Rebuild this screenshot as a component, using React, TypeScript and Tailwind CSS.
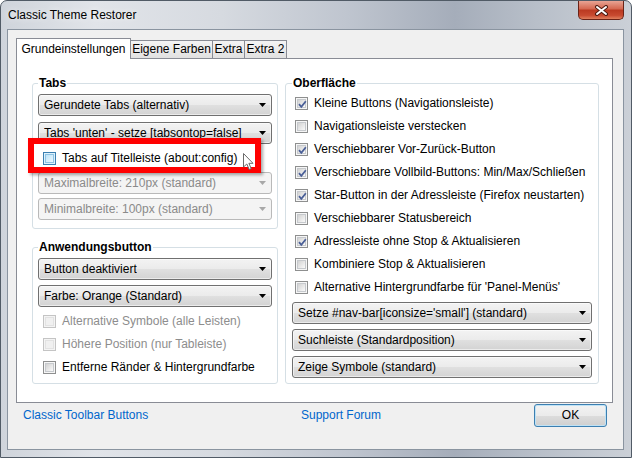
import React from "react";

function Box({ checked = false, disabled = false, hot = false }: { checked?: boolean; disabled?: boolean; hot?: boolean }) {
  const outer = hot
    ? "border-[#3c7fb1] bg-[#def2fc]"
    : disabled
      ? "border-[#c4c4c4] bg-[#f4f4f4]"
      : "border-[#8e8f8f] bg-[#f6f6f6]";
  const inner = hot
    ? "bg-linear-to-br from-[#bfe4f8] to-[#eaf7fe] border-[#8fc3e4]"
    : disabled
      ? "bg-[#f0f0f0] border-[#e2e2e2]"
      : "bg-linear-to-br from-[#d2d2d2] to-[#fafafa] border-[#c6c9cd]";
  return (
    <span className={`relative w-[13px] h-[13px] shrink-0 border p-px flex ${outer}`}>
      <span className={`flex-1 border ${inner}`} />
      {checked && (
        <svg className="absolute inset-0" width="13" height="13" viewBox="0 0 13 13">
          <path d="M3 6.2 L5.3 8.8 L9.8 3.2" fill="none" stroke="#4a5f97" strokeWidth="1.8" />
        </svg>
      )}
    </span>
  );
}

function Check({ label, checked, disabled }: { label: string; checked?: boolean; disabled?: boolean }) {
  return (
    <div className="h-[23px] flex items-center gap-[6px]">
      <Box checked={checked} disabled={disabled} />
      <span className={disabled ? "text-[#8d8d8d]" : "text-black"}>{label}</span>
    </div>
  );
}

function Combo({ label, disabled = false, className = "" }: { label: string; disabled?: boolean; className?: string }) {
  return (
    <div
      className={
        disabled
          ? `h-[22px] flex items-center justify-between pl-[5px] pr-[5px] rounded-[3px] border border-[#b9b9b9] bg-[#f4f4f4] text-[#8a8a8a] ${className}`
          : `h-[22px] flex items-center justify-between pl-[5px] pr-[5px] rounded-[3px] border border-[#707070] bg-[linear-gradient(#f3f3f3,#ebebeb_50%,#e0e0e0_50%,#d3d3d3)] shadow-[inset_0_0_0_1px_rgba(255,255,255,0.55)] ${className}`
      }
    >
      <span className="truncate">{label}</span>
      <svg width="7" height="4" viewBox="0 0 7 4" className="shrink-0">
        <path d="M0 0h7L3.5 4z" fill={disabled ? "#a8a8a8" : "#000"} />
      </svg>
    </div>
  );
}

export default function App() {
  return (
    <div className="w-[632px] h-[458px] flex flex-col rounded-t-[7px] border border-[#515b66] bg-[linear-gradient(90deg,#cfd4db_0%,#e1e4e9_15%,#d6dae0_35%,#bfc5cf_55%,#a5adba_72%,#b8bfc9_85%,#cbd0d7_100%)] font-['Liberation_Sans',Arial,sans-serif] text-[12px] leading-[15px] text-black">
      {/* Title bar */}
      <div className="h-[28px] shrink-0 flex justify-between">
        <span className="pl-[7px] pt-[7px] [text-shadow:0_0_6px_rgba(255,255,255,0.95)]">Classic Theme Restorer</span>
        <div className="mr-[7px] w-[46px] h-[19px] rounded-b-[5px] border border-t-0 border-[#6a2317] bg-[linear-gradient(#e8a494,#d56a53_42%,#bb3a22_52%,#c84a30_80%,#e0805e)] flex items-center justify-center">
          <svg width="15" height="11" viewBox="0 0 15 11">
            <path d="M3 2 L12 9 M12 2 L3 9" stroke="#4d1a10" strokeWidth="4" strokeLinecap="round" />
            <path d="M3 2 L12 9 M12 2 L3 9" stroke="#ffffff" strokeWidth="2" strokeLinecap="round" />
          </svg>
        </div>
      </div>

      {/* Client area */}
      <div className="flex-1 ml-[6px] mr-[7px] mb-[7px] border border-[#8a94a0] bg-[#f0f0f0] flex flex-col pl-[8px] pr-[10px] pt-[8px]">
        {/* Tabs */}
        <div className="h-[20px] flex items-end relative z-10">
          <div className="w-[115px] h-[21px] -mb-px border border-b-0 border-[#898c95] bg-white flex items-center justify-center">
            Grundeinstellungen
          </div>
          <div className="w-[83px] h-[18px] -ml-px border border-b-0 border-[#898c95] bg-linear-to-b from-[#f4f4f4] to-[#e1e1e1] flex items-center justify-center">
            Eigene Farben
          </div>
          <div className="w-[33px] h-[18px] -ml-px border border-b-0 border-[#898c95] bg-linear-to-b from-[#f4f4f4] to-[#e1e1e1] flex items-center justify-center">
            Extra
          </div>
          <div className="w-[43px] h-[18px] -ml-px border border-b-0 border-[#898c95] bg-linear-to-b from-[#f4f4f4] to-[#e1e1e1] flex items-center justify-center">
            Extra 2
          </div>
        </div>

        {/* Tab panel */}
        <div className="h-[345px] border border-[#898c95] bg-white flex gap-[7px] pl-[15px] pt-[17px]">
          {/* Left column */}
          <div className="w-[246px] flex flex-col gap-[11px]">
            <fieldset className="border border-[#d5dfe5] rounded-[3px] px-[5px] pb-[8px]">
              <legend className="px-px font-bold leading-[14px]">Tabs</legend>
              <Combo label="Gerundete Tabs (alternativ)" className="mt-[4px]" />
              <Combo label="Tabs 'unten' - setze [tabsontop=false]" className="mt-[6px]" />
              <div className="relative h-[28px] flex items-center gap-[6px] pl-[5px]">
                <div className="absolute left-[-10px] top-[-6px] w-[233px] h-[35px] border-[6px] border-[#ff0000] shadow-[2px_2px_3px_rgba(0,0,0,0.35)]" />
                <Box hot />
                <span className="relative">Tabs auf Titelleiste (about:config)</span>
                <svg className="absolute left-[205px] top-[9px]" width="11" height="18" viewBox="0 0 11 18">
                  <path d="M0.5 0.5 L0.5 14 L3.8 11 L6.2 16.5 L8.2 15.6 L5.9 10.3 L10 10.3 Z" fill="#ffffff" stroke="#6a6a6a" strokeWidth="1" />
                </svg>
              </div>
              <Combo label="Maximalbreite: 210px (standard)" disabled />
              <Combo label="Minimalbreite: 100px (standard)" disabled className="mt-[4px]" />
            </fieldset>

            <fieldset className="border border-[#d5dfe5] rounded-[3px] px-[5px] pb-[4px]">
              <legend className="px-px font-bold leading-[14px]">Anwendungsbutton</legend>
              <Combo label="Button deaktiviert" className="mt-[4px]" />
              <Combo label="Farbe: Orange (Standard)" className="mt-[5px]" />
              <div className="mt-[3px] pl-[5px]">
                <Check label="Alternative Symbole (alle Leisten)" disabled />
                <Check label="Höhere Position (nur Tableiste)" disabled />
                <Check label="Entferne Ränder & Hintergrundfarbe" />
              </div>
            </fieldset>
          </div>

          {/* Right column */}
          <div className="w-[314px] flex flex-col">
            <fieldset className="border border-[#d5dfe5] rounded-[3px] px-[6px] pb-[5px]">
              <legend className="px-px font-bold leading-[14px]">Oberfläche</legend>
              <div className="mt-[2px] pl-[3px]">
                <Check label="Kleine Buttons (Navigationsleiste)" checked />
                <Check label="Navigationsleiste verstecken" />
                <Check label="Verschiebbarer Vor-Zurück-Button" checked />
                <Check label="Verschiebbare Vollbild-Buttons: Min/Max/Schließen" checked />
                <Check label="Star-Button in der Adressleiste (Firefox neustarten)" checked />
                <Check label="Verschiebbarer Statusbereich" />
                <Check label="Adressleiste ohne Stop & Aktualisieren" checked />
                <Check label="Kombiniere Stop & Aktualisieren" />
                <Check label="Alternative Hintergrundfarbe für 'Panel-Menüs'" />
              </div>
              <Combo label="Setze #nav-bar[iconsize='small'] (standard)" className="mt-[3px]" />
              <Combo label="Suchleiste (Standardposition)" className="mt-[5px]" />
              <Combo label="Zeige Symbole (standard)" className="mt-[5px]" />
            </fieldset>
          </div>
        </div>

        {/* Footer */}
        <div className="h-[25px] flex items-center">
          <span className="w-[285px] pl-[7px] text-[#0066cc]">Classic Toolbar Buttons</span>
          <span className="flex-1 text-[#0066cc]">Support Forum</span>
          <div className="w-[73px] h-[23px] mr-[6px] rounded-[3px] border border-[#3c7fb1] bg-[linear-gradient(#f2f2f2,#ebebeb_50%,#dddddd_50%,#cfcfcf)] shadow-[inset_0_0_0_1px_#bfe2f5] flex items-center justify-center">
            OK
          </div>
        </div>
      </div>
    </div>
  );
}
